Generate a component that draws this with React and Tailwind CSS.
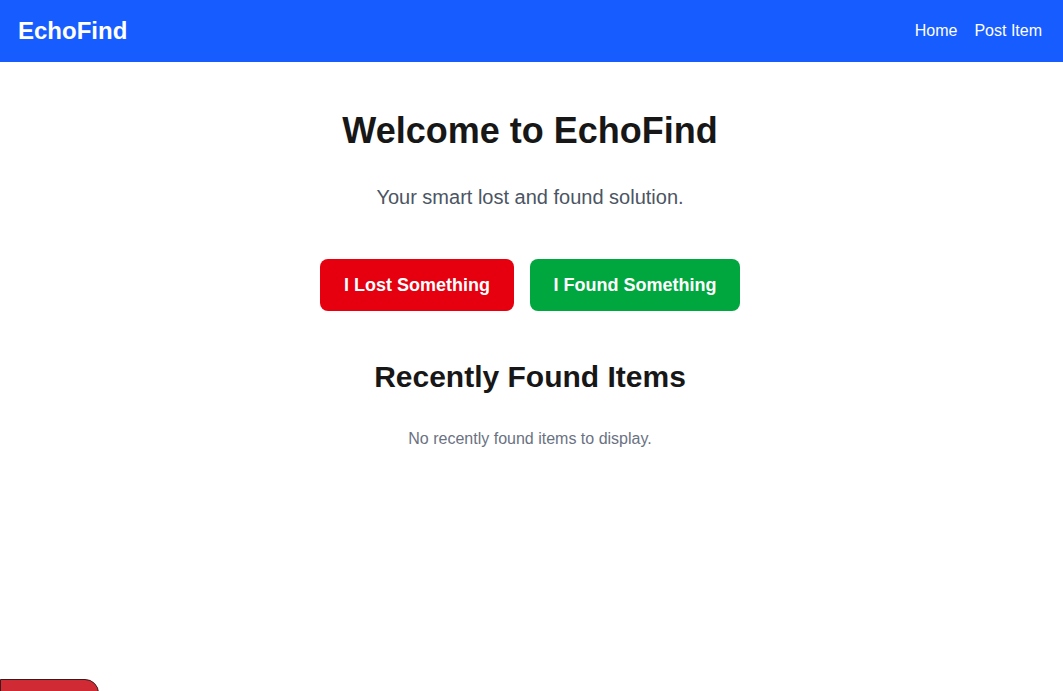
import React from "react";

export default function App() {
  return (
    <div className="min-h-[691px] bg-white relative overflow-hidden" style={{ fontFamily: '"Liberation Sans", Arial, sans-serif' }}>
      <nav className="h-[62px] bg-[#175cff] flex items-center justify-between pl-[18px] pr-[21px]">
        <span className="text-white text-[24px] font-bold">EchoFind</span>
        <div className="flex gap-[17px] text-white text-[16px]">
          <a href="#">Home</a>
          <a href="#">Post Item</a>
        </div>
      </nav>
      <main className="flex flex-col items-center pt-[49px] pr-[3px]">
        <h1 className="text-[36px] leading-[40px] font-bold text-[#171717]">Welcome to EchoFind</h1>
        <p className="mt-[32px] text-[20px] leading-[28px] text-[#4b5563]">Your smart lost and found solution.</p>
        <div className="mt-[48px] flex gap-4">
          <button className="h-[52px] w-[194px] rounded-lg bg-[#e6000f] text-white text-[18px] font-bold">I Lost Something</button>
          <button className="h-[52px] w-[210px] rounded-lg bg-[#00a63e] text-white text-[18px] font-bold">I Found Something</button>
        </div>
        <h2 className="mt-[48px] text-[30px] leading-[36px] font-bold text-[#171717]">Recently Found Items</h2>
        <p className="mt-[32px] text-[16px] leading-[24px] text-[#6a7282]">No recently found items to display.</p>
      </main>
      <div className="absolute left-0 top-[679px] w-[99px] h-[30px] bg-[#d02a35] rounded-tr-[14px] border border-[#3a1a1a]" />
    </div>
  );
}
